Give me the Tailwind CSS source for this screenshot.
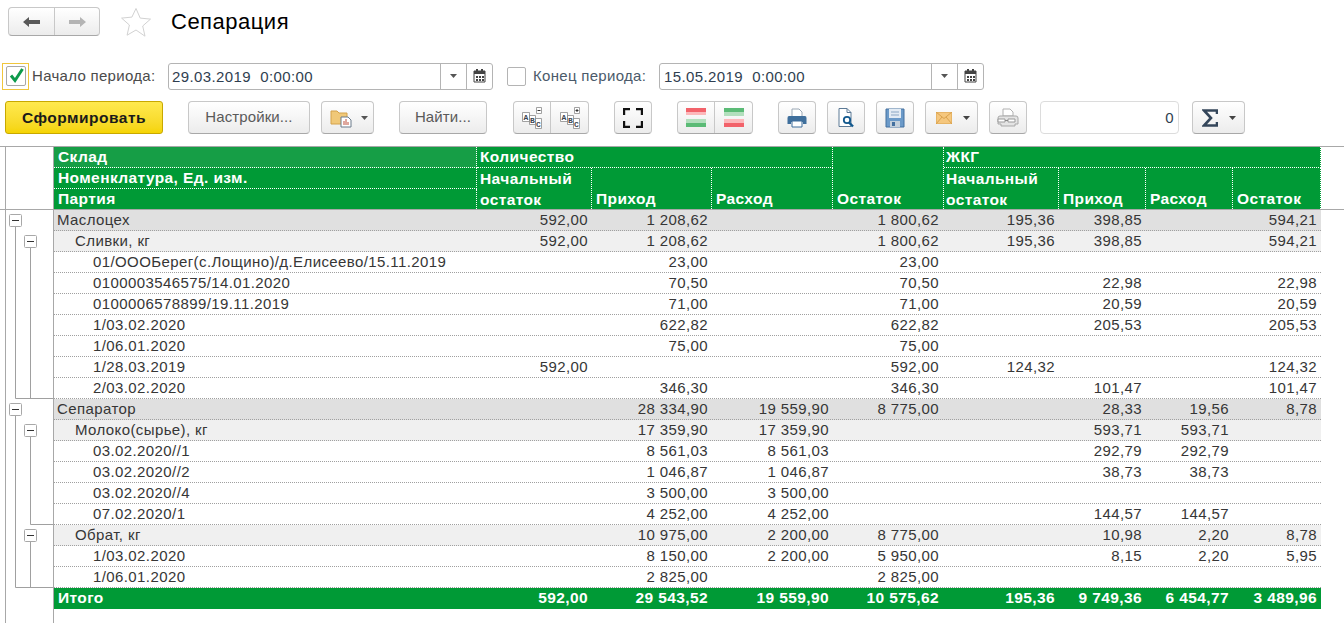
<!DOCTYPE html>
<html lang="ru">
<head>
  <meta charset="UTF-8">
  <title>Сепарация</title>
  <script src="https://cdn.jsdelivr.net/npm/@tailwindcss/browser@4"></script>
</head>
<body class="bg-white font-['Liberation_Sans',Arial,sans-serif] text-[15px] tracking-[0.4px] text-[#363636]">
<div class="w-[1344px] h-[623px] overflow-hidden">

  <!-- title bar -->
  <header class="h-[63px] flex items-start">
    <div class="ml-[8px] mt-[7px] w-[92px] h-[29px] flex rounded-[4px] border border-[#c8c8c8] border-b-[#a8a8a8] bg-gradient-to-b from-white to-[#ececec]">
      <div class="w-[46px] border-r border-[#c8c8c8] flex items-center justify-center">
        <svg width="18" height="12" viewBox="0 0 18 12"><path d="M0 6 6 1v3h11v4H6v3z" fill="#595959"/></svg>
      </div>
      <div class="flex-1 flex items-center justify-center">
        <svg width="18" height="12" viewBox="0 0 18 12"><path d="M18 6 12 1v3H1v4h11v3z" fill="#b4b4b4"/></svg>
      </div>
    </div>
    <svg class="ml-[20px] mt-[7px]" width="32" height="30" viewBox="0 0 32 30"><path d="M16 1.500l4.200 9.600 10.300 1-7.800 6.900 2.300 10.200L16 23l-8.900 5.200 2.300-10.200-7.800-6.900 10.300-1z" fill="#fff" stroke="#d2d2d2" stroke-width="1"/></svg>
    <h1 class="ml-[19px] mt-[9px] text-[22px] tracking-[0.5px] leading-[26px] text-black">Сепарация</h1>
  </header>

  <!-- period row -->
  <div class="h-[26px] flex items-center">
    <div class="ml-[2px] w-[27px] h-[27px] border border-[#f0c63c] flex items-center justify-center">
      <div class="w-[20px] h-[20px] rounded-[2px] border border-[#a8a8a8] relative">
        <svg class="absolute left-[1px] top-[-1px]" width="18" height="19" viewBox="0 0 18 19"><path d="M3 9.500l4 5L14.500 3" fill="none" stroke="#0d9a4b" stroke-width="3"/></svg>
      </div>
    </div>
    <span class="ml-[3px] w-[136px] tracking-[0.3px] text-[#4b4b4b]">Начало периода:</span>
    <div class="w-[325px] h-[27px] flex rounded-[3px] border border-[#b4b4b4] text-[#2f3e50]">
      <span class="flex-1 pl-[3px] leading-[25px] whitespace-pre">29.03.2019  0:00:00</span>
      <div class="w-[26px] border-l border-[#b4b4b4] flex items-center justify-center">
        <svg width="7" height="4" viewBox="0 0 7 4"><path d="M0 0h7L3.500 4z" fill="#555"/></svg>
      </div>
      <div class="w-[26px] border-l border-[#b4b4b4] flex items-center justify-center">
        <svg width="13" height="14" viewBox="0 0 13 14"><path d="M1 2h11v11H1z" fill="#fff" stroke="#444"/><path d="M1 2h11v3H1zM3 0h2v3H3zM8 0h2v3H8z" fill="#444"/><path d="M3 7h2v2H3zM6 7h2v2H6zM9 7h2v2H9zM3 10h2v2H3zM6 10h2v2H6zM9 10h2v2H9z" fill="#444"/></svg>
      </div>
    </div>
    <div class="ml-[14px] w-[19px] h-[19px] rounded-[2px] border border-[#b4b4b4]"></div>
    <span class="ml-[7px] w-[126px] tracking-[0.3px] text-[#4b5a6a]">Конец периода:</span>
    <div class="w-[325px] h-[27px] flex rounded-[3px] border border-[#b4b4b4] text-[#2f3e50]">
      <span class="flex-1 pl-[4px] leading-[25px] whitespace-pre">15.05.2019  0:00:00</span>
      <div class="w-[26px] border-l border-[#b4b4b4] flex items-center justify-center">
        <svg width="7" height="4" viewBox="0 0 7 4"><path d="M0 0h7L3.500 4z" fill="#555"/></svg>
      </div>
      <div class="w-[26px] border-l border-[#b4b4b4] flex items-center justify-center">
        <svg width="13" height="14" viewBox="0 0 13 14"><path d="M1 2h11v11H1z" fill="#fff" stroke="#444"/><path d="M1 2h11v3H1zM3 0h2v3H3zM8 0h2v3H8z" fill="#444"/><path d="M3 7h2v2H3zM6 7h2v2H6zM9 7h2v2H9zM3 10h2v2H3zM6 10h2v2H6zM9 10h2v2H9z" fill="#444"/></svg>
      </div>
    </div>
  </div>

  <!-- toolbar -->
  <div class="h-[33px] mt-[12px] flex items-stretch">
    <button class="ml-[5px] w-[158px] rounded-[3px] border border-[#c8a800] bg-gradient-to-b from-[#ffe94d] to-[#f5d400] text-[15.5px] tracking-[0.5px] font-bold text-[#1a1a1a]">Сформировать</button>
    <button class="ml-[25px] w-[122px] rounded-[4px] border border-[#c8c8c8] border-b-[#a8a8a8] bg-gradient-to-b from-white to-[#ececec] tracking-[0.1px] text-[#5a5a5a]">Настройки...</button>
    <button class="ml-[11px] w-[53px] rounded-[4px] border border-[#c8c8c8] border-b-[#a8a8a8] bg-gradient-to-b from-white to-[#ececec] flex items-center pl-[8px] gap-[9px]">
      <svg width="22" height="20" viewBox="0 0 22 20"><path d="M1 3h6l2 2h8v11H1z" fill="#f0c878" stroke="#d4a24a"/><path d="M11 9h7l3 3v7H11z" fill="#fff" stroke="#6a7a8a"/><path d="M14 17v-4M16 17v-6M18 17v-3" stroke="#c0503c"/></svg>
      <svg width="7" height="4" viewBox="0 0 7 4"><path d="M0 0h7L3.500 4z" fill="#555"/></svg>
    </button>
    <button class="ml-[25px] w-[88px] rounded-[4px] border border-[#c8c8c8] border-b-[#a8a8a8] bg-gradient-to-b from-white to-[#ececec] tracking-[0.1px] text-[#5a5a5a]">Найти...</button>
    <div class="ml-[26px] w-[76px] flex rounded-[4px] border border-[#c8c8c8] border-b-[#a8a8a8] bg-gradient-to-b from-white to-[#ececec]">
      <div class="w-[37px] border-r border-[#c8c8c8] flex items-center justify-center">
        <svg width="22" height="25" viewBox="0 0 22 25" font-family="Liberation Mono, monospace" font-size="8" font-weight="700" fill="#3c4650" text-anchor="middle">
          <g fill="#fff" stroke="#8a8a8a" stroke-width=".8"><path d="M1.500 7.500h7v9h-7zM8.500 10.500h6v9h-6zM14.500 13.500h6v10h-6zM15.500 2.500h5v6h-5z"/></g>
          <text x="5" y="15">A</text><text x="11.500" y="18">B</text><text x="17.500" y="22">C</text>
          <path d="M16.500 5.500h3" stroke="#333"/>
        </svg>
      </div>
      <div class="flex-1 flex items-center justify-center">
        <svg width="22" height="25" viewBox="0 0 22 25" font-family="Liberation Mono, monospace" font-size="8" font-weight="700" fill="#3c4650" text-anchor="middle">
          <g fill="#fff" stroke="#8a8a8a" stroke-width=".8"><path d="M1.500 7.500h7v9h-7zM8.500 10.500h6v9h-6zM14.500 13.500h6v10h-6zM15.500 2.500h5v6h-5z"/></g>
          <text x="5" y="15">A</text><text x="11.500" y="18">B</text><text x="17.500" y="22">C</text>
          <path d="M16.500 5.500h3M18 4v3" stroke="#333"/>
        </svg>
      </div>
    </div>
    <button class="ml-[25px] w-[38px] rounded-[4px] border border-[#c8c8c8] border-b-[#a8a8a8] bg-gradient-to-b from-white to-[#ececec] flex items-center justify-center">
      <svg width="20" height="20" viewBox="0 0 20 20"><path d="M1 7V1h6M13 1h6v6M19 13v6h-6M7 19H1v-6" fill="none" stroke="#111" stroke-width="2.400"/></svg>
    </button>
    <div class="ml-[25px] w-[76px] flex rounded-[4px] border border-[#c8c8c8] border-b-[#a8a8a8] bg-gradient-to-b from-white to-[#ececec]">
      <div class="w-[37px] border-r border-[#c8c8c8] flex items-center justify-center">
        <svg width="20" height="20" viewBox="0 0 20 20"><path d="M0 0h20v4H0z" fill="#f2626a"/><path d="M0 4h20v3H0z" fill="#fcb8bb"/><path d="M0 11h20v4H0z" fill="#b2dfbd"/><path d="M0 15h20v4H0z" fill="#5bbb76"/></svg>
      </div>
      <div class="flex-1 flex items-center justify-center">
        <svg width="20" height="20" viewBox="0 0 20 20"><path d="M0 0h20v4H0z" fill="#5bbb76"/><path d="M0 4h20v4H0z" fill="#b2dfbd"/><path d="M0 11h20v4H0z" fill="#fcb8bb"/><path d="M0 15h20v4H0z" fill="#f2626a"/></svg>
      </div>
    </div>
    <button class="ml-[25px] w-[38px] rounded-[4px] border border-[#c8c8c8] border-b-[#a8a8a8] bg-gradient-to-b from-white to-[#ececec] flex items-center justify-center">
      <svg width="20" height="20" viewBox="0 0 20 20"><path d="M5 1h7l3 3v5H5z" fill="#fff" stroke="#9aa7b4"/><path d="M2 8h16q1.500 0 1.500 2v6H16v-2H4v2H.5v-6Q.5 8 2 8z" fill="#3f6f9c"/><path d="M5 13h10v6H5z" fill="#fff" stroke="#3f6f9c"/></svg>
    </button>
    <button class="ml-[11px] w-[38px] rounded-[4px] border border-[#c8c8c8] border-b-[#a8a8a8] bg-gradient-to-b from-white to-[#ececec] flex items-center justify-center">
      <svg width="20" height="20" viewBox="0 0 20 20"><path d="M3 .5h8l4 4v14H3z" fill="#fff" stroke="#5c7a96"/><path d="M11 .5v4h4" fill="none" stroke="#5c7a96"/><circle cx="11" cy="12" r="3.200" fill="#fff" stroke="#13598e" stroke-width="1.800"/><path d="M13 14.500l4 4" stroke="#13598e" stroke-width="2.400"/></svg>
    </button>
    <button class="ml-[11px] w-[38px] rounded-[4px] border border-[#c8c8c8] border-b-[#a8a8a8] bg-gradient-to-b from-white to-[#ececec] flex items-center justify-center">
      <svg width="20" height="20" viewBox="0 0 20 20"><path d="M1 1h18v18H1z" fill="#6b9ac9" stroke="#44709f"/><path d="M4 1h12v9H4z" fill="#e2ebf4"/><path d="M6 4h8M6 7h8" stroke="#8aa6c4"/><path d="M5 13h10v6H5z" fill="#c4d0dc"/><path d="M7 14h3v4H7z" fill="#44709f"/></svg>
    </button>
    <button class="ml-[11px] w-[53px] rounded-[4px] border border-[#c8c8c8] border-b-[#a8a8a8] bg-gradient-to-b from-white to-[#ececec] flex items-center pl-[10px] gap-[11px]">
      <svg width="16" height="12" viewBox="0 0 16 12"><path d="M0 0h16v12H0z" fill="#f5c77e" stroke="#d9a24e"/><path d="M0 0l8 6.500L16 0M0 12l6-7M16 12l-6-7" fill="none" stroke="#d9a24e"/></svg>
      <svg width="7" height="4" viewBox="0 0 7 4"><path d="M0 0h7L3.500 4z" fill="#444"/></svg>
    </button>
    <button class="ml-[11px] w-[38px] rounded-[4px] border border-[#c8c8c8] border-b-[#a8a8a8] bg-gradient-to-b from-white to-[#ececec] flex items-center justify-center">
      <svg width="22" height="20" viewBox="0 0 22 20"><path d="M6 1h7l3 3v4H6z" fill="#fff" stroke="#b0b0b0"/><path d="M3 8h16q2 0 2 2v6h-3v2H4v-2H1v-6q0-2 2-2z" fill="#e4e4e4" stroke="#a8a8a8"/><path d="M1 11h7v3H1zM11 11h7v3h-7z" fill="#fff" stroke="#999"/><path d="M8 12.500h3" stroke="#888"/></svg>
    </button>
    <div class="ml-[13px] w-[139px] rounded-[4px] border border-[#dcdcdc] text-right pr-[4px] leading-[31px] text-[#2f3e50]">0</div>
    <button class="ml-[13px] w-[53px] rounded-[4px] border border-[#c8c8c8] border-b-[#a8a8a8] bg-gradient-to-b from-white to-[#ececec] flex items-center pl-[9px] gap-[11px]">
      <svg width="16" height="18" viewBox="0 0 16 18"><path d="M15 5V1.500H2L9 9 2 16.500h13V13" fill="none" stroke="#34465a" stroke-width="2.600"/></svg>
      <svg width="7" height="4" viewBox="0 0 7 4"><path d="M0 0h7L3.500 4z" fill="#444"/></svg>
    </button>
  </div>

  <!-- report table -->
  <section class="mt-[12px] border-t border-[#a8a8a8]">
    <div class="flex border-b border-[#a8a8a8] font-bold text-[15.5px] text-white">
      <div class="ml-[5px] w-[49px] border-x border-[#a8a8a8]"></div>
      <div class="w-[1267px] h-[62px] bg-[#009a36] grid grid-cols-[423px_115px_120px_121px_111px_115px_87px_87px_88px] grid-rows-[21px_21px_20px] leading-[20px]">
        <div class="col-start-1 row-start-1 bg-[#169e46] pl-[4px] border-r border-b border-dotted border-white">Склад</div>
        <div class="col-start-2 col-span-3 row-start-1 pl-[3px] border-r border-b border-dotted border-white">Количество</div>
        <div class="col-start-6 col-span-4 row-start-1 pl-[2px] border-r border-b border-dotted border-white">ЖКГ</div>

        <div class="col-start-1 row-start-2 pl-[4px] border-r border-b border-dotted border-white">Номенклатура, Ед. изм.</div>
        <div class="col-start-2 row-start-2 row-span-2 pl-[3px] border-r border-dotted border-white leading-[21px]">Начальный<br>остаток</div>
        <div class="col-start-3 row-start-2 row-span-2 pl-[4px] border-r border-dotted border-white flex items-end">Приход</div>
        <div class="col-start-4 row-start-2 row-span-2 pl-[4px] border-r border-dotted border-white flex items-end">Расход</div>
        <div class="col-start-5 row-start-1 row-span-3 pl-[4px] border-r border-dotted border-white flex items-end">Остаток</div>
        <div class="col-start-6 row-start-2 row-span-2 pl-[2px] border-r border-dotted border-white leading-[21px]">Начальный<br>остаток</div>
        <div class="col-start-7 row-start-2 row-span-2 pl-[4px] border-r border-dotted border-white flex items-end">Приход</div>
        <div class="col-start-8 row-start-2 row-span-2 pl-[4px] border-r border-dotted border-white flex items-end">Расход</div>
        <div class="col-start-9 row-start-2 row-span-2 pl-[4px] border-r border-dotted border-white flex items-end">Остаток</div>

        <div class="col-start-1 row-start-3 pl-[4px] border-r border-dotted border-white">Партия</div>
      </div>
    </div>

    <div class="flex h-[414px]">
      <div class="relative ml-[5px] w-[49px] border-x border-[#a8a8a8]">
        <!-- grouping tree -->
        <svg class="absolute left-0 top-0" width="48" height="414" viewBox="0 0 48 414" fill="none">
          <g stroke="#a0a0a0">
            <path d="M9.500 12V188.500H47M24.500 32V188.500"/>
            <path d="M9.500 200V377.500H47M24.500 222V314.500H47M24.500 326V377.500"/>
          </g>
          <g fill="#fff" stroke="#a8a8a8">
            <rect x="3.500" y="4.500" width="12" height="12" rx="1"/>
            <rect x="18.500" y="25.500" width="12" height="12" rx="1"/>
            <rect x="3.500" y="193.500" width="12" height="12" rx="1"/>
            <rect x="18.500" y="214.500" width="12" height="12" rx="1"/>
            <rect x="18.500" y="319.500" width="12" height="12" rx="1"/>
          </g>
          <path d="M6 10.500h7M21 31.500h7M6 199.500h7M21 220.500h7M21 325.500h7" stroke="#333"/>
        </svg>
      </div>
      <div id="rows" class="w-[1267px]"></div>
    </div>
  </section>
</div>

<script>
  const rows = [
    ['g', 'Маслоцех', '592,00', '1 208,62', '', '1 800,62', '195,36', '398,85', '', '594,21'],
    ['s', 'Сливки, кг', '592,00', '1 208,62', '', '1 800,62', '195,36', '398,85', '', '594,21'],
    ['p', '01/ОООБерег(с.Лощино)/д.Елисеево/15.11.2019', '', '23,00', '', '23,00', '', '', '', ''],
    ['p', '0100003546575/14.01.2020', '', '70,50', '', '70,50', '', '22,98', '', '22,98'],
    ['p', '0100006578899/19.11.2019', '', '71,00', '', '71,00', '', '20,59', '', '20,59'],
    ['p', '1/03.02.2020', '', '622,82', '', '622,82', '', '205,53', '', '205,53'],
    ['p', '1/06.01.2020', '', '75,00', '', '75,00', '', '', '', ''],
    ['p', '1/28.03.2019', '592,00', '', '', '592,00', '124,32', '', '', '124,32'],
    ['p', '2/03.02.2020', '', '346,30', '', '346,30', '', '101,47', '', '101,47'],
    ['g', 'Сепаратор', '', '28 334,90', '19 559,90', '8 775,00', '', '28,33', '19,56', '8,78'],
    ['s', 'Молоко(сырье), кг', '', '17 359,90', '17 359,90', '', '', '593,71', '593,71', ''],
    ['p', '03.02.2020//1', '', '8 561,03', '8 561,03', '', '', '292,79', '292,79', ''],
    ['p', '03.02.2020//2', '', '1 046,87', '1 046,87', '', '', '38,73', '38,73', ''],
    ['p', '03.02.2020//4', '', '3 500,00', '3 500,00', '', '', '', '', ''],
    ['p', '07.02.2020/1', '', '4 252,00', '4 252,00', '', '', '144,57', '144,57', ''],
    ['s', 'Обрат, кг', '', '10 975,00', '2 200,00', '8 775,00', '', '10,98', '2,20', '8,78'],
    ['p', '1/03.02.2020', '', '8 150,00', '2 200,00', '5 950,00', '', '8,15', '2,20', '5,95'],
    ['p', '1/06.01.2020', '', '2 825,00', '', '2 825,00', '', '', '', ''],
    ['t', 'Итого', '592,00', '29 543,52', '19 559,90', '10 575,62', '195,36', '9 749,36', '6 454,77', '3 489,96'],
  ];
  const rowStyle = {
    g: 'bg-[#e0e0e0] border-b border-dotted border-[#a0a0a0]',
    s: 'bg-[#f0f0f0] border-b border-dotted border-[#a0a0a0]',
    p: 'border-b border-dotted border-[#a0a0a0]',
    t: 'bg-[#009a36] text-white text-[15.5px] font-bold',
  };
  const indent = { g: 'pl-[3px]', s: 'pl-[21px]', p: 'pl-[39px]', t: 'pl-[4px]' };

  document.getElementById('rows').innerHTML = rows.map(([kind, name, ...nums]) => `
    <div class="h-[21px] grid grid-cols-[423px_115px_120px_121px_111px_115px_87px_87px_88px] leading-[20px] whitespace-nowrap ${rowStyle[kind]}">
      <div class="${indent[kind]}">${name}</div>
      ${nums.map((n, i) => `<div class="text-right ${i === 3 ? 'pr-[5px]' : 'pr-[4px]'}">${n}</div>`).join('')}
    </div>
  `).join('');
</script>
</body>
</html>
